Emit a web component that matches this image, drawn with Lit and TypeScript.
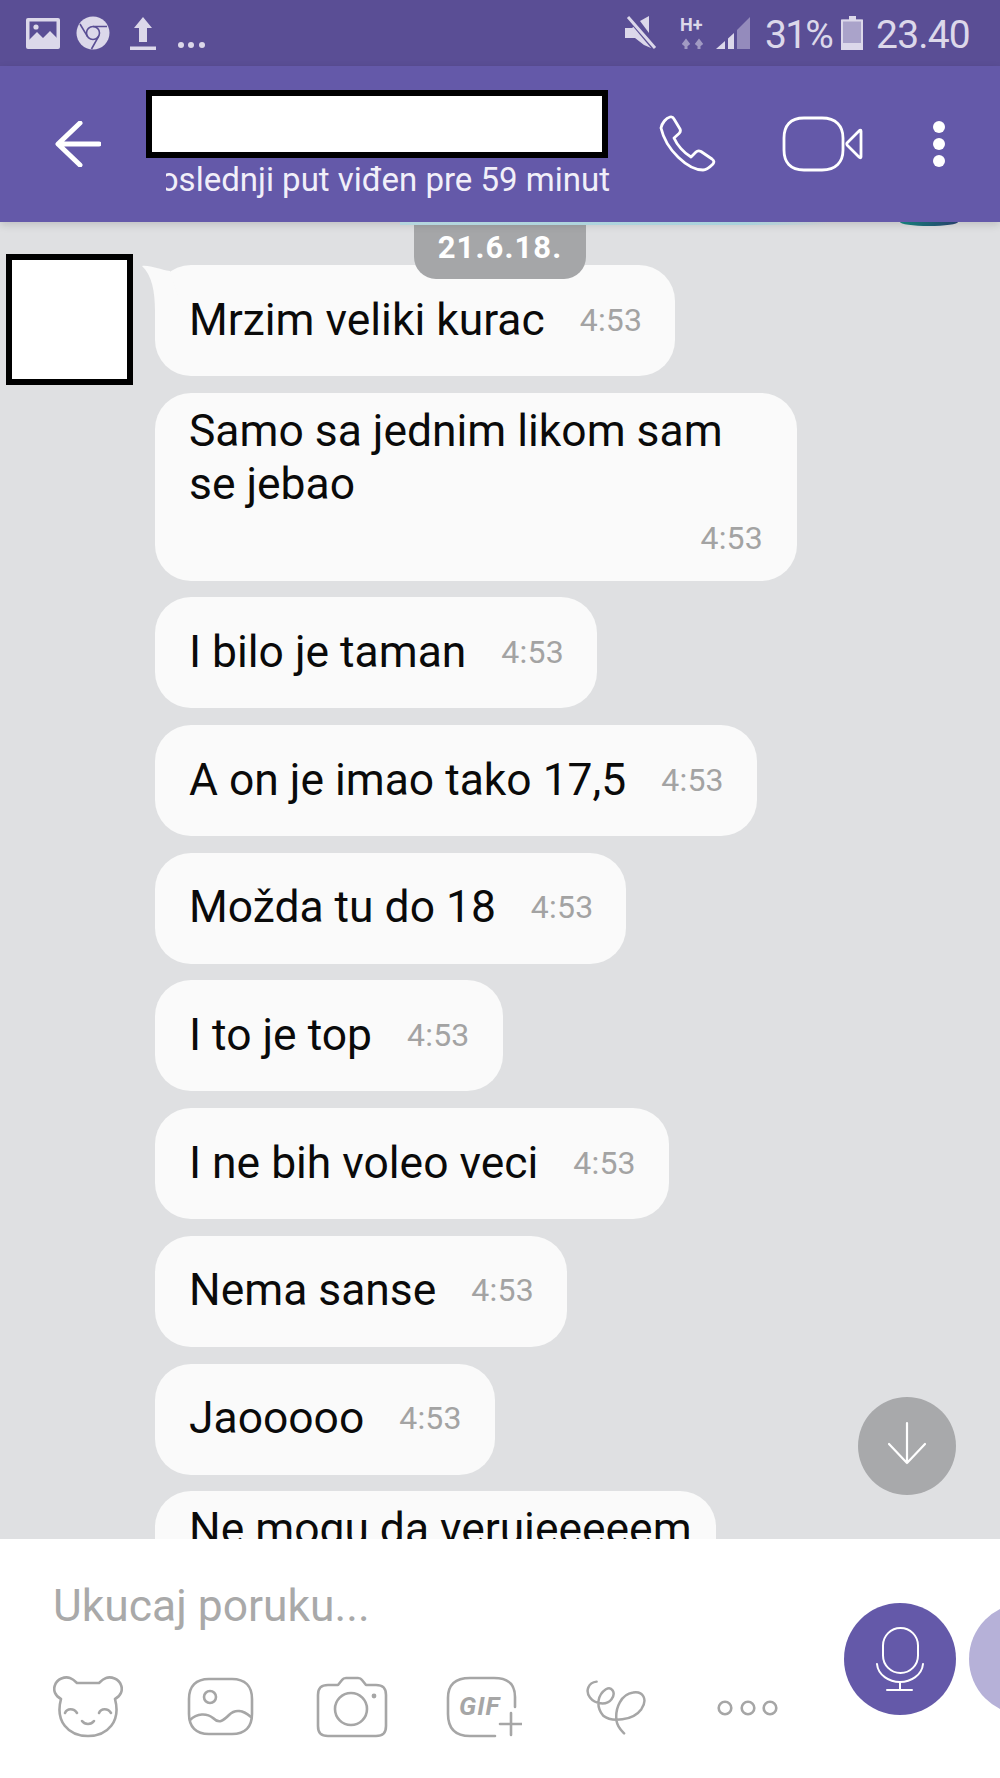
import { LitElement, html, css, svg } from "lit";
import { customElement } from "lit/decorators.js";

const MESSAGES = [
  "Mrzim veliki kurac",
  "Samo sa jednim likom sam se jebao",
  "I bilo je taman",
  "A on je imao tako 17,5",
  "Možda tu do 18",
  "I to je top",
  "I ne bih voleo veci",
  "Nema sanse",
  "Jaooooo",
  "Ne mogu da verujeeeeem",
];

const ic = (w: number, h: number, body: unknown, vb = `0 0 ${w} ${h}`) => html`<svg
  width=${w}
  height=${h}
  viewBox=${vb}
  fill="none"
>${body}</svg>`;

@customElement("app-root")
export class AppRoot extends LitElement {
  static styles = css`
    :host {
      display: flex;
      flex-direction: column;
      width: 1000px;
      height: 1778px;
      overflow: hidden;
      font-family: Roboto, "Liberation Sans", sans-serif;
      background: #dfe0e2;
    }
    svg { display: block; flex: none; }
    .status {
      height: 66px;
      flex: none;
      background: #5a4e95;
      color: #dcd8ea;
      display: flex;
      align-items: center;
      padding: 0 30px 0 26px;
      box-sizing: border-box;
    }
    .status .spacer { flex: 1; }
    .status-text {
      font-size: 39px;
      line-height: 66px;
      letter-spacing: -0.8px;
      white-space: nowrap;
      padding-top: 3px;
    }
    .status-text.pct { letter-spacing: -1.8px; }
    .dots { margin-top: 24px; }
    .g23 { width: 23px; }
    .g13 { width: 13px; }
    .g10 { width: 10px; }
    .g9 { width: 9px; }
    .g14 { width: 14px; }
    .g16 { width: 16px; }
    .g20 { width: 20px; }
    .g21 { width: 21px; }
    .header {
      height: 156px;
      flex: none;
      background: #6459a9;
      display: flex;
      align-items: center;
      position: relative;
      z-index: 3;
      box-shadow: 0 3px 8px rgba(0, 0, 0, 0.14);
      padding-left: 55px;
      box-sizing: border-box;
    }
    .title {
      width: 464px;
      margin-left: 45px;
      align-self: flex-start;
      padding-top: 24px;
    }
    .redact {
      background: #fff;
      border: 6.5px solid #000;
      box-sizing: border-box;
    }
    .name { height: 68px; width: 462px; }
    .sub {
      margin: 1px 0 0 20px;
      width: 444px;
      display: flex;
      justify-content: flex-end;
      overflow: hidden;
      white-space: nowrap;
      color: #f1eff9;
      font-size: 33px;
      line-height: 42px;
    }
    .phone { margin-left: 48px; margin-top: 2px; }
    .video { margin-left: 64px; }
    .more { margin-left: 68px; }
    .strip {
      position: absolute;
      left: 400px;
      top: 156px;
      width: 430px;
      height: 3px;
      background: linear-gradient(90deg, #b5d6de, #a9d2dc 80%, transparent);
    }
    .blob {
      position: absolute;
      left: 900px;
      top: 156px;
      width: 58px;
      height: 4px;
      border-radius: 0 0 50% 50% / 0 0 100% 100%;
      background: linear-gradient(90deg, #16807a, #27406b);
    }
    .chat {
      flex: 1;
      min-height: 0;
      position: relative;
      overflow: hidden;
      display: grid;
      grid-template-columns: 155px 1fr;
      align-items: start;
      padding-top: 32px;
    }
    .avatar {
      width: 127px;
      height: 131px;
      margin-left: 6px;
    }
    .list {
      display: flex;
      flex-direction: column;
      align-items: flex-start;
      gap: 16.7px;
      margin-top: 11px;
    }
    .bubble {
      position: relative;
      background: #fafafa;
      border-radius: 36px;
      min-height: 111px;
      box-sizing: border-box;
      padding: 0 33px 2px 34px;
      display: flex;
      align-items: center;
      gap: 35px;
      font-size: 44.4px;
      color: #0a0a0a;
      white-space: nowrap;
    }
    .bubble.multi {
      display: block;
      padding: 12px 24px 14px 34px;
      line-height: 53px;
      height: 188px;
    }
    .bubble.fixed {
      width: 642px;
      padding-right: 34px;
      white-space: normal;
    }
    .fixed .msg { display: block; width: 560px; }
    .time {
      font-size: 32px;
      color: #a3a3a3;
      letter-spacing: 0.2px;
    }
    .multi .time {
      display: block;
      text-align: right;
      line-height: 55px;
    }
    .tail {
      position: absolute;
      left: -13px;
      top: 0;
    }
    .date {
      position: absolute;
      left: 414px;
      top: 0;
      width: 172px;
      height: 57px;
      z-index: 2;
      background: #a5a6a8;
      border-radius: 0 0 22px 22px;
      color: #fff;
      font-size: 31px;
      font-weight: 700;
      letter-spacing: 1.1px;
      display: flex;
      align-items: center;
      justify-content: center;
      padding-bottom: 6px;
      box-sizing: border-box;
    }
    .down {
      position: absolute;
      left: 858px;
      top: 1175px;
      width: 98px;
      height: 98px;
      border-radius: 50%;
      background: #a8a9ab;
    }
    .footer {
      height: 239px;
      flex: none;
      background: #fff;
      position: relative;
      z-index: 1;
      display: grid;
      grid-template-columns: 844px 1fr;
    }
    .placeholder {
      font-size: 44.4px;
      line-height: 50px;
      color: #a9a9a9;
      padding: 42px 0 0 53px;
    }
    .tools {
      display: flex;
      align-items: center;
      height: 64px;
      margin-top: 44px;
      padding-left: 53px;
    }
    .t64 { width: 64px; }
    .t62 { width: 62px; }
    .t58 { width: 58px; }
    .t63 { width: 63px; }
    .t69 { width: 69px; }
    .ooo { margin-top: 2px; }
    .round {
      width: 112px;
      height: 112px;
      border-radius: 50%;
      flex: none;
    }
    .sends {
      display: flex;
      gap: 13px;
      margin-top: 64px;
      width: 300px;
    }
    .mic { background: #6459a9; }
    .ghost { background: #b6b1d8; }
  `;

  private statusLeft() {
    const c = "#dcd8ea";
    const bg = "#5a4e95";
    return html`
      ${ic(34, 31, svg`
        <rect width="34" height="31" rx="2" fill=${c}/>
        <rect x="3.5" y="3.5" width="27" height="24" fill=${bg}/>
        <path d="M3 28V22L11 14L17 20L24 13L31 20V28Z" fill=${c}/>
        <circle cx="10" cy="9" r="2.6" fill=${c}/>`)}
      <span class="g16"></span>
      ${ic(34, 34, svg`
        <circle cx="17" cy="17" r="16.5" fill=${c}/>
        <circle cx="17" cy="17" r="6.5" stroke=${bg} stroke-width="1.6"/>
        <path d="M17 10.5H31M11.4 20.3L4 8M22.6 20.3L15.5 33" stroke=${bg} stroke-width="1.6"/>`)}
      <span class="g20"></span>
      ${ic(26, 33, svg`
        <path d="M13 0L22 11H17V25H9V11H4Z" fill=${c}/>
        <rect y="29.5" width="26" height="3.5" fill=${c}/>`)}
      <span class="g21"></span>
      <div class="dots">
        ${ic(28, 8, svg`
          <circle cx="4" cy="4" r="3" fill=${c}/>
          <circle cx="14" cy="4" r="3" fill=${c}/>
          <circle cx="25" cy="4" r="3" fill=${c}/>`)}
      </div>
    `;
  }

  private statusRight() {
    const c = "#dcd8ea";
    return html`
      ${ic(32, 34, svg`
        <path d="M0 12H7L12 8L26 24V32L19 29L10 22H0Z" fill=${c}/>
        <path d="M15 5L24 0V17Z" fill=${c}/>
        <path d="M4 1L30 32" stroke="#5a4e95" stroke-width="6"/>
        <path d="M3 1L30 32" stroke=${c} stroke-width="3"/>`)}
      <span class="g23"></span>
      ${ic(26, 34, svg`
        <text x="0" y="15" font-size="18" font-weight="700" fill=${c} font-family="Roboto">H+</text>
        <path d="M6 33V25M3 29L6 25L9 29M19 33V25M16 29L19 25L22 29" stroke=${c} stroke-opacity=".55" stroke-width="3"/>`)}
      <span class="g10"></span>
      ${ic(35, 34, svg`
        <path d="M0 33L9 25V33Z" fill=${c}/>
        <path d="M12 22.5L18 17V33H12Z" fill=${c}/>
        <path d="M21 14L34 1V33H21Z" fill=${c} fill-opacity=".45"/>`)}
      <span class="g14"></span>
      <span class="status-text pct">31%</span>
      <span class="g9"></span>
      ${ic(22, 34, svg`
        <rect x="8" y="0" width="7" height="5" fill=${c}/>
        <rect x="0" y="3.5" width="22" height="30" rx="1.5" fill=${c} fill-opacity=".62"/>
        <path d="M1 4.500H21V33H1Z" stroke=${c} stroke-width="2"/>
        <rect x="0" y="27" width="22" height="7" fill=${c}/>`)}
      <span class="g13"></span>
      <span class="status-text">23.40</span>
    `;
  }

  private tools() {
    const s = "#a6a6a6";
    const g = (d: string, w = 2.6) =>
      svg`<path d=${d} stroke=${s} stroke-width=${w} stroke-linecap="round" stroke-linejoin="round"/>`;
    return html`
      ${ic(70, 62, svg`
        ${g("M8 23C2 20 0 14 2 9C4 3 12 0 17 2C20 3 22 5 24 7H46C48 5 50 3 53 2C58 0 66 3 68 9C70 14 68 20 62 23C68 45 55 60 35 60C15 60 2 45 8 23Z")}
        ${g("M12 37C14 32 21 32 24 37M46 37C48 32 55 32 58 37M29 45C32 49 38 49 41 45")}`)}
      <span class="t64"></span>
      ${ic(67, 60, svg`
        ${g("M22 2H45C58 2 65 9 65 22V37C65 50 58 57 45 57H22C9 57 2 50 2 37V22C2 9 9 2 22 2Z")}
        <circle cx="23" cy="20" r="6" stroke=${s} stroke-width="2.6"/>
        ${g("M3 43C10 36 20 36 26 41C32 47 36 44 42 38C48 32 56 33 64 40")}`)}
      <span class="t62"></span>
      ${ic(72, 62, svg`
        ${g("M12 9H22L26 4C27 2.500 28 2 30 2H42C44 2 45 2.500 46 4L50 9H60C67 9 70 12 70 19V50C70 57 67 60 60 60H12C5 60 2 57 2 50V19C2 12 5 9 12 9Z")}
        <circle cx="35" cy="33" r="16" stroke=${s} stroke-width="2.6"/>
        <circle cx="58" cy="20" r="2.4" fill=${s}/>`)}
      <span class="t58"></span>
      ${ic(76, 62, svg`
        ${g("M69 31V21C69 8 62 2 48 2H24C9 2 2 9 2 22V38C2 52 9 60 24 60H49")}
        <text x="13" y="39" font-size="26" font-weight="700" font-style="italic" fill=${s} font-family="Roboto" letter-spacing="1">GIF</text>
        ${g("M65 37V59M54 48H76")}`)}
      <span class="t63"></span>
      ${ic(63, 57, g("M290 902C265 905 255 930 270 950C285 970 320 975 335 955C350 935 335 915 318 925C295 940 285 975 310 1005C335 1025 400 1020 425 985C445 955 430 930 400 935C365 940 345 980 350 1020C353 1040 365 1050 373 1058", 7.5), "255 895 190 170")}
      <span class="t69"></span>
      <div class="ooo">
        ${ic(62, 16, svg`
          <circle cx="8" cy="8" r="6.3" stroke=${s} stroke-width="2.6"/>
          <circle cx="31" cy="8" r="6.3" stroke=${s} stroke-width="2.6"/>
          <circle cx="53" cy="8" r="6.3" stroke=${s} stroke-width="2.6"/>`)}
      </div>
    `;
  }

  render() {
    return html`
      <div class="status">
        ${this.statusLeft()}
        <span class="spacer"></span>
        ${this.statusRight()}
      </div>
      <div class="header">
        ${ic(46, 46, svg`<path d="M44 23H4M25 2L3 23L25 44" stroke="#fff" stroke-width="5" stroke-linecap="round" stroke-linejoin="round"/>`)}
        <div class="title">
          <div class="redact name"></div>
          <div class="sub"><span>Poslednji put viđen pre 59 minut</span></div>
        </div>
        <div class="phone">
          ${ic(60, 60, svg`<path d="M3 13C4 8 8 3 12 2C14 1.500 15 2 16 4L22 14C23 16 22.500 17 21 18.500L16 23C19 30 26 38 33 42L38 37C39.500 35.500 41 35.500 43 36.500L54 44C56 45.500 56.500 47 55 49C52 52 48 55 45 55C30 55 8 35 3 13Z" stroke="#fff" stroke-width="2.8" stroke-linejoin="round"/>`)}
        </div>
        <div class="video">
          ${ic(82, 56, svg`
            <path d="M22 2H40C54 2 61 10 61 22V34C61 46 54 54 40 54H22C8 54 2 46 2 34V22C2 10 8 2 22 2Z" stroke="#fff" stroke-width="2.8"/>
            <path d="M79 15C79 14 78 14 77 15L65 27C64.500 28 64.500 28.500 65 29L77 41C78 42 79 42 79 41Z" stroke="#fff" stroke-width="2.8" stroke-linejoin="round"/>`)}
        </div>
        <div class="more">
          ${ic(14, 50, svg`
            <circle cx="7" cy="8" r="6" fill="#fff"/>
            <circle cx="7" cy="25" r="6" fill="#fff"/>
            <circle cx="7" cy="42" r="6" fill="#fff"/>`)}
        </div>
        <div class="strip"></div>
        <div class="blob"></div>
      </div>
      <div class="chat">
        <div class="date">21.6.18.</div>
        <div class="redact avatar"></div>
        <div class="list">
          ${MESSAGES.map(
            (m, i) => html`<div class="bubble ${i === 1 ? "multi fixed" : i === 9 ? "multi" : ""}">
              ${i === 0
                ? html`<svg class="tail" width="40" height="50" viewBox="0 0 40 50">
                    <path d="M0 1C9 0 18 5 28 6L36 30L13 46C13 27 10 10 0 1Z" fill="#fafafa"/>
                  </svg>`
                : ""}
              <span class="msg">${m}</span><span class="time">4:53</span>
            </div>`
          )}
        </div>
        <div class="down">
          ${ic(98, 98, svg`<path d="M49 26V66M31 47L49 66L67 47" stroke="#fff" stroke-width="2.2" stroke-linecap="round" stroke-linejoin="round"/>`)}
        </div>
      </div>
      <div class="footer">
        <div>
          <div class="placeholder">Ukucaj poruku...</div>
          <div class="tools">${this.tools()}</div>
        </div>
        <div class="sends">
          <div class="round mic">
            ${ic(112, 112, svg`
              <rect x="39" y="25" width="35" height="45" rx="17.5" stroke="#fff" stroke-width="2"/>
              <path d="M33 61C34 72 45 79 56 79C67 79 78 72 79 61M56 79V87M43 87H68" stroke="#fff" stroke-width="2" stroke-linecap="round"/>`)}
          </div>
          <div class="round ghost"></div>
        </div>
      </div>
    `;
  }
}
